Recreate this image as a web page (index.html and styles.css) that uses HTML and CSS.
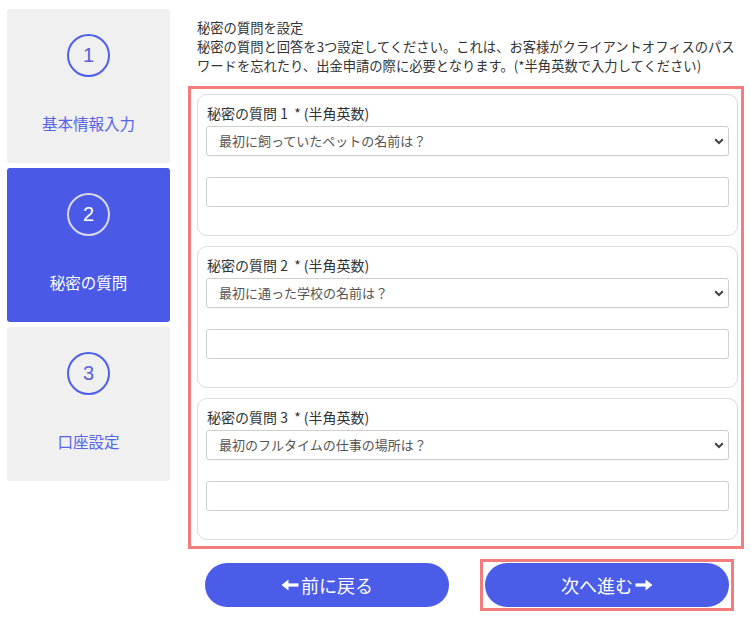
FILE: index.html
```html
<!DOCTYPE html>
<html lang="ja">
<head>
<meta charset="utf-8">
<title>秘密の質問</title>
<link rel="stylesheet" href="styles.css">
</head>
<body>
<div class="page">
  <nav class="steps">
    <div class="step">
      <div class="step-num">1</div>
      <div class="step-label">基本情報入力</div>
    </div>
    <div class="step step-active">
      <div class="step-num">2</div>
      <div class="step-label">秘密の質問</div>
    </div>
    <div class="step">
      <div class="step-num">3</div>
      <div class="step-label">口座設定</div>
    </div>
  </nav>
  <main class="main">
    <div class="intro">
      <div>秘密の質問を設定</div>
      <div>秘密の質問と回答を3つ設定してください。これは、お客様がクライアントオフィスのパス<br>ワードを忘れたり、出金申請の際に必要となります。(*半角英数で入力してください)</div>
    </div>
    <div class="highlight">
      <section class="card">
        <div class="card-label">秘密の質問 1&nbsp; * (半角英数)</div>
        <div class="select">最初に飼っていたペットの名前は？<span class="chev"><svg width="10" height="7" viewBox="0 0 10 7"><path d="M1.2 1.3 L5 5 L8.8 1.3" fill="none" stroke="#444" stroke-width="2"/></svg></span></div>
        <div class="input"></div>
      </section>
      <section class="card">
        <div class="card-label">秘密の質問 2&nbsp; * (半角英数)</div>
        <div class="select">最初に通った学校の名前は？<span class="chev"><svg width="10" height="7" viewBox="0 0 10 7"><path d="M1.2 1.3 L5 5 L8.8 1.3" fill="none" stroke="#444" stroke-width="2"/></svg></span></div>
        <div class="input"></div>
      </section>
      <section class="card">
        <div class="card-label">秘密の質問 3&nbsp; * (半角英数)</div>
        <div class="select">最初のフルタイムの仕事の場所は？<span class="chev"><svg width="10" height="7" viewBox="0 0 10 7"><path d="M1.2 1.3 L5 5 L8.8 1.3" fill="none" stroke="#444" stroke-width="2"/></svg></span></div>
        <div class="input"></div>
      </section>
    </div>
    <div class="actions">
      <div class="action-cell">
        <button class="btn"><svg class="arrow" width="18" height="14" viewBox="0 0 18 14"><path d="M6 7 H17.5" stroke="#fff" stroke-width="3.2"/><path d="M0.5 7 L7.5 1.5 V12.5 Z" fill="#fff"/></svg>前に戻る</button>
      </div>
      <div class="action-cell">
        <div class="btn-frame"><button class="btn">次へ進む<svg class="arrow" width="18" height="14" viewBox="0 0 18 14"><path d="M0.5 7 H12" stroke="#fff" stroke-width="3.2"/><path d="M17.5 7 L10.5 1.5 V12.5 Z" fill="#fff"/></svg></button></div>
      </div>
    </div>
  </main>
</div>
</body>
</html>
```
FILE: styles.css
```css
* { box-sizing: border-box; }
html, body { margin: 0; padding: 0; background: #fff; }
body {
  font-family: "Noto Sans CJK JP", "Noto Sans", sans-serif;
  color: #333;
}
.page {
  display: flex;
  gap: 18px;
  padding: 9px 0 0 7px;
  width: 750px;
}
.steps {
  width: 163px;
  display: flex;
  flex-direction: column;
  gap: 5px;
}
.step {
  height: 154px;
  background: #f0f0f0;
  border-radius: 3px;
  display: flex;
  flex-direction: column;
  align-items: center;
  padding-top: 25px;
  color: #5664e8;
}
.step-num {
  width: 43px;
  height: 43px;
  border: 2px solid #4f5fe8;
  border-radius: 50%;
  display: flex;
  align-items: center;
  justify-content: center;
  font-family: "Liberation Sans", Arial, sans-serif;
  font-size: 20px;
  color: #5a5fd8;
}
.step-label {
  margin-top: 36px;
  font-size: 15.5px;
  line-height: 20px;
}
.step-active {
  background: #4a5ae6;
  color: #fff;
}
.step-active .step-num {
  border-color: #d9d9e6;
  color: #fff;
}
.main {
  width: 556px;
}
.intro {
  margin-top: 9px;
  padding-left: 9px;
  font-size: 13.3px;
  line-height: 19px;
  color: #333;
  white-space: nowrap;
}
.highlight {
  margin-top: 11px;
  border: 3px solid #f37c7c;
  padding: 5px 3px 6px 6px;
  display: flex;
  flex-direction: column;
  gap: 10px;
}
.card {
  height: 142px;
  border: 1px solid #dcdcdc;
  border-radius: 10px;
  padding: 8px 8px 0 8px;
}
.card-label {
  font-size: 14px;
  line-height: 20px;
  padding-left: 1px;
  color: #333;
}
.select {
  position: relative;
  margin-top: 3px;
  height: 30px;
  border: 1px solid #cfcfcf;
  border-radius: 3px;
  padding-left: 12px;
  font-size: 13px;
  line-height: 28px;
  color: #555;
  box-shadow: 0 1px 1px rgba(0,0,0,0.04);
}
.chev {
  position: absolute;
  right: 4px;
  top: 11px;
  line-height: 0;
}
.input {
  margin-top: 21px;
  height: 30px;
  border: 1px solid #cfcfcf;
  border-radius: 3px;
  background: #fff;
}
.actions {
  display: grid;
  grid-template-columns: 278px 278px;
  margin-top: 10px;
}
.action-cell {
  display: flex;
  align-items: flex-start;
}
.action-cell:first-child { padding-top: 4px; padding-left: 17px; }
.action-cell:last-child { padding-left: 14px; }
.btn-frame {
  border: 3px solid #f37c7c;
  padding: 1px 2px;
  line-height: 0;
}
.btn {
  width: 244px;
  height: 44px;
  border: none;
  border-radius: 22px;
  background: #4a5ce8;
  color: #fff;
  font-family: "Noto Sans CJK JP", "Noto Sans", sans-serif;
  font-size: 18px;
  line-height: 44px;
  padding: 0;
  display: flex;
  align-items: center;
  justify-content: center;
  gap: 2px;
}
.arrow { display: block; }
```
